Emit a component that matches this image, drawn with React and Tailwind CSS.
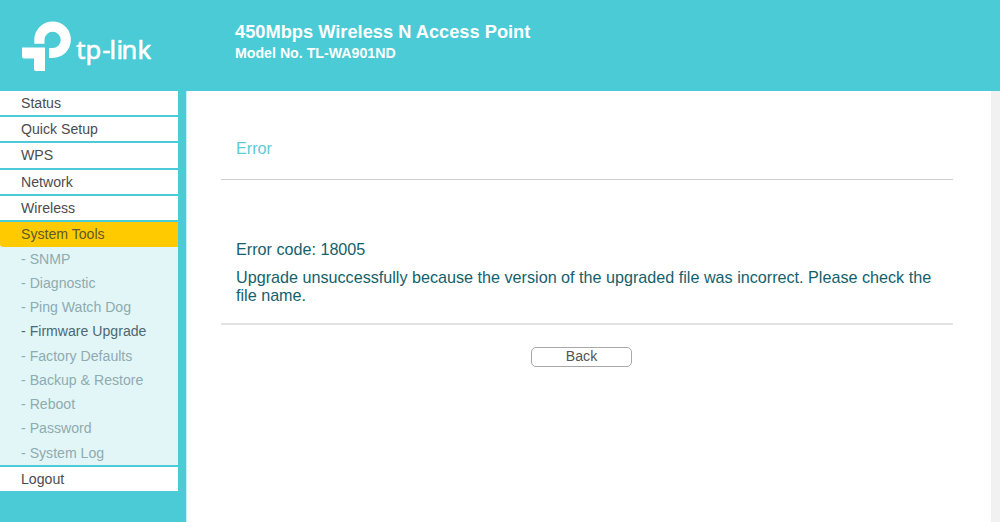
import React from "react";
import clsx from "clsx";

const MENU = [
  { label: "Status" },
  { label: "Quick Setup" },
  { label: "WPS" },
  { label: "Network" },
  { label: "Wireless" },
  {
    label: "System Tools",
    children: [
      "SNMP",
      "Diagnostic",
      "Ping Watch Dog",
      "Firmware Upgrade",
      "Factory Defaults",
      "Backup & Restore",
      "Reboot",
      "Password",
      "System Log"
    ]
  },
  { label: "Logout" }
];

const ACTIVE_PAGE = "Firmware Upgrade";

function Logo() {
  return (
    <svg className="h-[91px] w-[235px] shrink-0" viewBox="0 0 235 91" fill="#fff">
      <path d="M34.3 43.7V39.5A18.3 18.3 0 1 1 52.6 58H49V48H52.6A8.1 8.1 0 1 0 44.5 39.9V43.7Z" />
      <path d="M22 47.4H45V71H36Q34 71 34 69V58.4H24Q22 58.4 22 56.4Z" />
      <text
        x="76.3 85.6 102.3 109.6 116.6 121.4 137.4"
        y="58.6"
        fontFamily="'Noto Sans', sans-serif"
        fontSize="25.5"
        stroke="#fff"
        strokeWidth="0.6"
        strokeLinejoin="round"
      >
        tp-link
      </text>
    </svg>
  );
}

function Header() {
  return (
    <header className="flex h-[91px] text-white">
      <Logo />
      <div className="pt-[21px] font-bold">
        <h1 className="text-[18.25px] leading-[22px]">450Mbps Wireless N Access Point</h1>
        <h2 className="text-[14.18px] leading-[20px]">Model No. TL-WA901ND</h2>
      </div>
    </header>
  );
}

function SubMenu({ items }) {
  return (
    <ul className="bg-[#e2f6f8]">
      {items.map((item) => (
        <li
          key={item}
          className={clsx(
            "h-[24.25px] pl-[21px] leading-[25.5px]",
            item === ACTIVE_PAGE ? "text-[#4c6870]" : "text-[#8eabb0]"
          )}
        >
          - {item}
        </li>
      ))}
    </ul>
  );
}

function Sidebar() {
  return (
    <nav className="w-[177.5px] shrink-0 text-[14.12px]">
      <ul className="space-y-[2px]">
        {MENU.map(({ label, children }) => (
          <li key={label} className={clsx(children && "bg-[#e2f6f8]")}>
            <div
              className={clsx(
                "pl-[21px] leading-[25.5px]",
                children
                  ? "h-[24.7px] rounded-bl-[3px] bg-[#ffcb00] text-[#5c5a2e]"
                  : "h-[24.2px] bg-white text-[#4b4b50]"
              )}
            >
              {label}
            </div>
            {children && <SubMenu items={children} />}
          </li>
        ))}
      </ul>
    </nav>
  );
}

function ErrorPage() {
  return (
    <main className="ml-[8.5px] flex-1 border-l border-[#c8eff2] bg-white pr-[38px] pl-[34px] text-[16.16px] text-[#14616c]">
      <h3 className="h-[89px] border-b border-[#cfcfcf] pt-[48px] pl-[15px] leading-[18px] text-[#5ccbd8]">
        Error
      </h3>
      <div className="h-[145px] border-b-2 border-[#e2e2e2] pt-[60px] pr-[15px] pl-[15px] leading-[18px]">
        <p>Error code: 18005</p>
        <p className="mt-[10px]">
          Upgrade unsuccessfully because the version of the upgraded file was incorrect. Please check the
          file name.
        </p>
      </div>
      <div className="flex pt-[22px] pl-[310px]">
        <button className="h-5 w-[101px] rounded-[5px] border border-[#a8a8a8] pb-[2px] text-[14.12px] leading-[16px] text-[#555]">
          Back
        </button>
      </div>
    </main>
  );
}

export default function App() {
  return (
    <div className="flex h-[522px] w-[1000px] flex-col overflow-hidden bg-[#4acbd6] font-['Liberation_Sans',Arial,sans-serif]">
      <Header />
      <div className="flex flex-1">
        <Sidebar />
        <ErrorPage />
        <div className="w-[9px] shrink-0 bg-[#f1f1f1]" />
      </div>
    </div>
  );
}
